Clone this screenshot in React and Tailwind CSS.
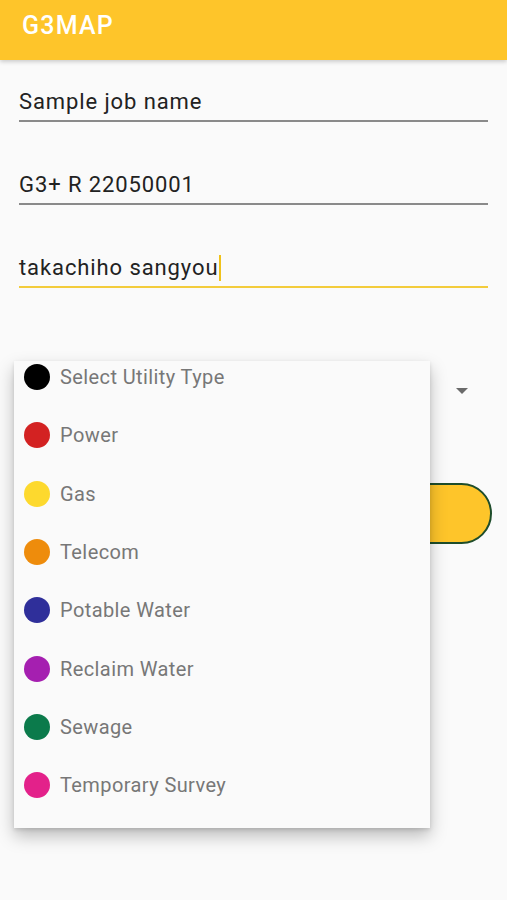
import React from "react";

const utilities = [
  { name: "Select Utility Type", color: "bg-[#000000]" },
  { name: "Power", color: "bg-[#d32222]" },
  { name: "Gas", color: "bg-[#fdd92e]" },
  { name: "Telecom", color: "bg-[#ee8c0c]" },
  { name: "Potable Water", color: "bg-[#2f2f9a]" },
  { name: "Reclaim Water", color: "bg-[#a51fb0]" },
  { name: "Sewage", color: "bg-[#0b7a4b]" },
  { name: "Temporary Survey", color: "bg-[#e3218a]" },
];

export default function App() {
  return (
    <div className="relative h-[900px] w-[507px] overflow-hidden bg-[#fafafa] font-['Roboto',sans-serif]">
      {/* header */}
      <div className="flex h-[60px] items-start bg-[#fec52a] px-[22px] pt-[11px] shadow-[0_2px_4px_rgba(0,0,0,0.18)]">
        <h1 className="text-[25px] font-medium leading-[30px] tracking-[1.2px] text-white">G3MAP</h1>
      </div>

      {/* form */}
      <div className="flex flex-col px-[19px] pt-[28px]">
        <div className="border-b-2 border-[#8a8a8a] pb-[4px] text-[22px] leading-[28px] tracking-[0.9px] text-[#222]">
          Sample job name
        </div>
        <div className="mt-[49px] border-b-2 border-[#8a8a8a] pb-[4px] text-[22px] leading-[28px] tracking-[0.9px] text-[#222]">
          G3+ R 22050001
        </div>
        <div className="mt-[49px] flex items-center border-b-2 border-[#f3cc3c] pb-[4px] text-[22px] leading-[28px] tracking-[0.9px] text-[#222]">
          takachiho sangyou
          <span className="ml-[1px] inline-block h-[26px] w-[2px] bg-[#f0c21a]" />
        </div>

        {/* spinner */}
        <div className="mt-[85px] flex h-[36px] items-center justify-end pr-[20px]">
          <div className="h-0 w-0 border-x-[6px] border-t-[6px] border-x-transparent border-t-[#6a6a6a]" />
        </div>

        {/* button */}
        <div className="mt-[74px] ml-[-5px] mr-[-4px] h-[61px] rounded-full border-2 border-[#1e4d2b] bg-[#fec52a]" />
      </div>

      {/* dropdown popup */}
      <div className="absolute left-[14px] top-[361px] h-[467px] w-[416px] overflow-hidden bg-[#fafafa] shadow-[0_8px_16px_rgba(0,0,0,0.25),0_2px_4px_rgba(0,0,0,0.12)]">
        <ul className="mt-[-13px]">
          {utilities.map((u) => (
            <li key={u.name} className="flex h-[58.3px] items-center pl-[10px]">
              <span className={`h-[26px] w-[26px] rounded-full ${u.color}`} />
              <span className="ml-[10px] text-[20px] tracking-[0.4px] text-[#777]">{u.name}</span>
            </li>
          ))}
        </ul>
      </div>
    </div>
  );
}
